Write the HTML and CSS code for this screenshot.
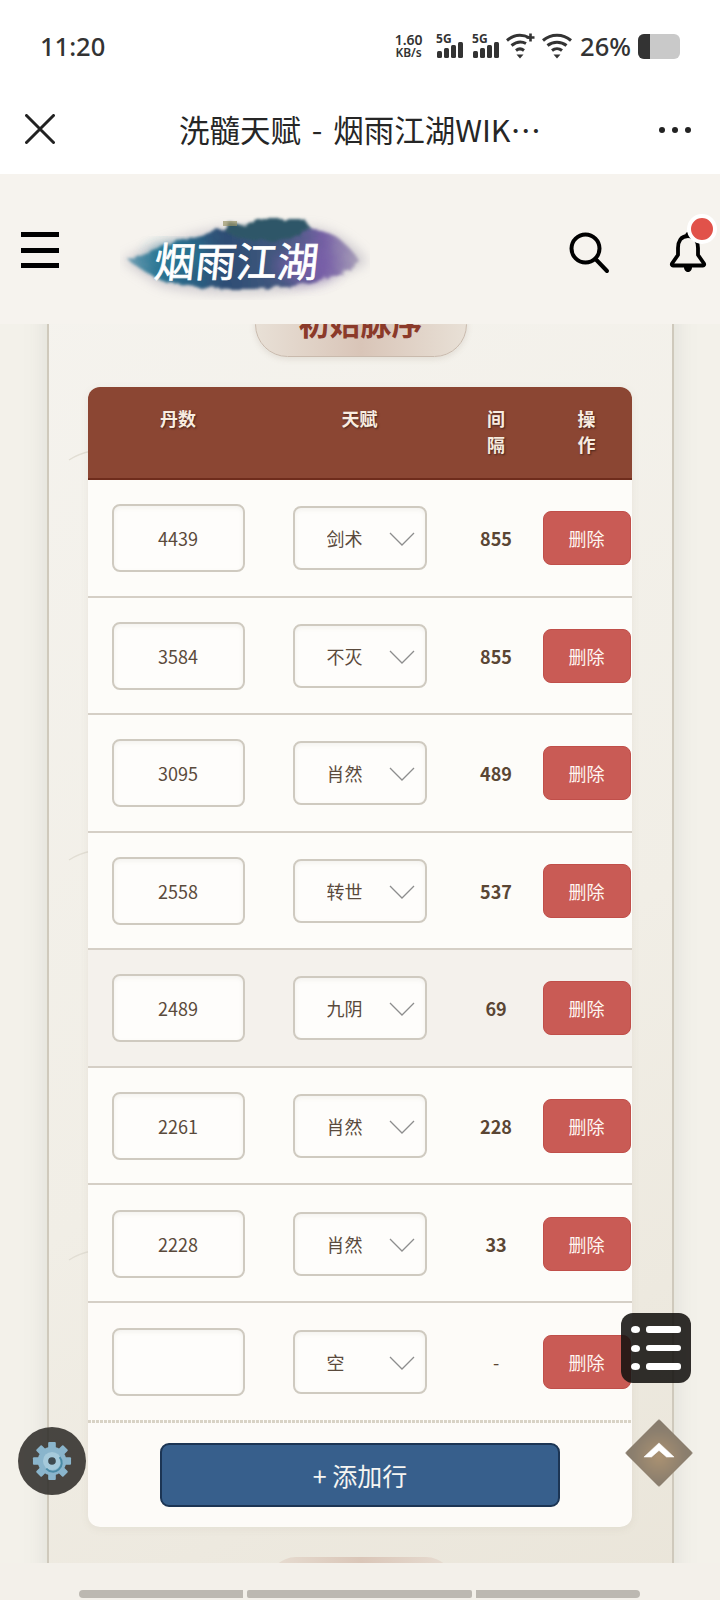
FILE: index.html
```html
<!DOCTYPE html>
<html lang="zh">
<head>
<meta charset="utf-8">
<title>洗髓天赋 - 烟雨江湖WIKI</title>
<link rel="stylesheet" href="styles.css">
</head>
<body>
<div class="screen">
  <div class="status">
    <span class="time">11:20</span>
    <div class="status-right">
      <span class="speed"><b>1.60</b><small>KB/s</small></span>
      <span class="net net-first"><i>5G</i>
        <svg width="27" height="16" viewBox="0 0 27 16"><rect x="0" y="9" width="5" height="7" rx="1.5"/><rect x="7" y="6" width="5" height="10" rx="1.5"/><rect x="14" y="3" width="5" height="13" rx="1.5"/><rect x="21" y="0" width="5" height="16" rx="1.5"/></svg>
      </span>
      <span class="net"><i>5G</i>
        <svg width="27" height="16" viewBox="0 0 27 16"><rect x="0" y="9" width="5" height="7" rx="1.5"/><rect x="7" y="6" width="5" height="10" rx="1.5"/><rect x="14" y="3" width="5" height="13" rx="1.5"/><rect x="21" y="0" width="5" height="16" rx="1.5"/></svg>
      </span>
      <svg class="wifi wifi-plus" width="29" height="26" viewBox="0 0 29 26"><path d="M1 7.5C8 1.5 16 1 24 5M5.500 12.500C10.500 8.500 16 8.300 20 10.500M10 17.500C12.500 15.500 15.500 15.500 18 17.500" fill="none" stroke="#333" stroke-width="3"/><path d="M10.500 21.500h7l-3.500 4z" fill="#333"/><path d="M24.500 0.500v8M20.500 4.500h8" stroke="#333" stroke-width="2.600"/></svg>
      <svg class="wifi" width="30" height="26" viewBox="0 0 30 26"><path d="M1 7.500C9 0.500 21 0.500 29 7.500M5.500 12.500C11 8 19 8 24.500 12.500M10 17.500C13 15 17 15 20 17.500" fill="none" stroke="#333" stroke-width="3"/><path d="M11.500 21.500h7l-3.500 4z" fill="#333"/></svg>
      <span class="pct">26%</span>
      <span class="battery"><span class="battery-fill"></span></span>
    </div>
  </div>

  <div class="titlebar">
    <svg class="close" width="30" height="30" viewBox="0 0 30 30"><path d="M1.500 1.500L28.500 28.500M28.500 1.500L1.500 28.500" stroke="#222" stroke-width="3" stroke-linecap="round"/></svg>
    <span class="title">洗髓天赋 - 烟雨江湖WIK…</span>
    <span class="more"><i></i><i></i><i></i></span>
  </div>

  <header class="site-header">
    <span class="burger"><i></i><i></i><i></i></span>
    <svg class="logo" width="250" height="90" viewBox="0 0 250 90">
      <defs>
        <linearGradient id="ink" x1="0" y1="0" x2="1" y2="0">
          <stop offset="0" stop-color="#6d9db2"/>
          <stop offset="0.14" stop-color="#2b7492"/>
          <stop offset="0.42" stop-color="#2d4d74"/>
          <stop offset="0.68" stop-color="#44597f"/>
          <stop offset="0.84" stop-color="#7560a4"/>
          <stop offset="1" stop-color="#aca4ba"/>
        </linearGradient>
        <filter id="rough" x="-10%" y="-20%" width="120%" height="140%">
          <feTurbulence type="fractalNoise" baseFrequency="0.08" numOctaves="3" seed="4"/>
          <feDisplacementMap in="SourceGraphic" scale="8"/>
          <feGaussianBlur stdDeviation="1.600"/>
        </filter>
        <filter id="halo" x="-15%" y="-30%" width="130%" height="160%">
          <feGaussianBlur stdDeviation="6"/>
        </filter>
        <filter id="soft" x="-30%" y="-50%" width="160%" height="200%">
          <feGaussianBlur stdDeviation="8"/>
        </filter>
      </defs>
      <path d="M2 50C26 38 60 26 100 18H196C218 22 236 36 248 52C226 64 205 72 172 80C125 86 74 84 42 76C26 68 14 58 2 50Z" fill="#bdb9c2" opacity="0.7" filter="url(#halo)"/>
      <path d="M8 50C30 40 60 30 104 19H192C212 20 228 34 240 52C226 63 205 70 168 77C122 81 76 79 46 72C30 66 20 58 8 50Z" fill="url(#ink)" filter="url(#rough)"/>
      <ellipse cx="185" cy="56" rx="30" ry="15" fill="#7a5eaa" opacity="0.75" filter="url(#soft)"/>
      <ellipse cx="58" cy="46" rx="30" ry="10" fill="#2a7d98" opacity="0.8" filter="url(#soft)"/>
      <path d="M104 20L110 12L122 15L134 9H184L192 20L170 30L120 30Z" fill="#2f5668" filter="url(#rough)"/>
      <rect x="103" y="11" width="14" height="5" fill="#9a9468" opacity="0.7"/>
      <text class="logo-text" transform="translate(33 67) skewX(-6)">烟雨江湖</text>
    </svg>
    <svg class="search" width="42" height="42" viewBox="0 0 42 42"><circle cx="17.500" cy="16.500" r="14" fill="none" stroke="#000" stroke-width="4"/><path d="M27.500 27L39 39" stroke="#000" stroke-width="4" stroke-linecap="round"/></svg>
    <span class="bell">
      <svg width="38" height="42" viewBox="0 0 38 42"><path d="M19 5C11.500 5 9 11 9 17V24L3 32.500C2.500 33.500 3 34.500 4 34.500H34C35 34.500 35.500 33.500 35 32.500L29 24V17C29 11 26.500 5 19 5Z" fill="none" stroke="#000" stroke-width="3.800" stroke-linejoin="round"/><path d="M15 36H23C23 39.500 21 41 19 41C17 41 15 39.500 15 36Z" fill="#000"/><circle cx="19" cy="3.500" r="2.500" fill="#000"/></svg>
      <i class="badge"></i>
    </span>
  </header>

  <main class="content">
    <section class="panel">
      <h2 class="pill">初始脉序</h2>
      <div class="table">
        <div class="thead">
          <span>丹数</span><span>天赋</span><span class="narrow">间隔</span><span class="narrow">操作</span>
        </div>

        <div class="row">
          <input class="num" value="4439">
          <label class="pick"><select><option>剑术</option></select><svg width="26" height="14" viewBox="0 0 26 14"><path d="M1 1L13 13L25 1" fill="none" stroke="#8d8d8d" stroke-width="1.300"/></svg></label>
          <b class="gap">855</b>
          <button class="del">删除</button>
        </div>
        <div class="row">
          <input class="num" value="3584">
          <label class="pick"><select><option>不灭</option></select><svg width="26" height="14" viewBox="0 0 26 14"><path d="M1 1L13 13L25 1" fill="none" stroke="#8d8d8d" stroke-width="1.300"/></svg></label>
          <b class="gap">855</b>
          <button class="del">删除</button>
        </div>
        <div class="row">
          <input class="num" value="3095">
          <label class="pick"><select><option>肖然</option></select><svg width="26" height="14" viewBox="0 0 26 14"><path d="M1 1L13 13L25 1" fill="none" stroke="#8d8d8d" stroke-width="1.300"/></svg></label>
          <b class="gap">489</b>
          <button class="del">删除</button>
        </div>
        <div class="row">
          <input class="num" value="2558">
          <label class="pick"><select><option>转世</option></select><svg width="26" height="14" viewBox="0 0 26 14"><path d="M1 1L13 13L25 1" fill="none" stroke="#8d8d8d" stroke-width="1.300"/></svg></label>
          <b class="gap">537</b>
          <button class="del">删除</button>
        </div>
        <div class="row row-hover">
          <input class="num" value="2489">
          <label class="pick"><select><option>九阴</option></select><svg width="26" height="14" viewBox="0 0 26 14"><path d="M1 1L13 13L25 1" fill="none" stroke="#8d8d8d" stroke-width="1.300"/></svg></label>
          <b class="gap">69</b>
          <button class="del">删除</button>
        </div>
        <div class="row">
          <input class="num" value="2261">
          <label class="pick"><select><option>肖然</option></select><svg width="26" height="14" viewBox="0 0 26 14"><path d="M1 1L13 13L25 1" fill="none" stroke="#8d8d8d" stroke-width="1.300"/></svg></label>
          <b class="gap">228</b>
          <button class="del">删除</button>
        </div>
        <div class="row">
          <input class="num" value="2228">
          <label class="pick"><select><option>肖然</option></select><svg width="26" height="14" viewBox="0 0 26 14"><path d="M1 1L13 13L25 1" fill="none" stroke="#8d8d8d" stroke-width="1.300"/></svg></label>
          <b class="gap">33</b>
          <button class="del">删除</button>
        </div>
        <div class="row row-last">
          <input class="num" value="">
          <label class="pick"><select><option>空</option></select><svg width="26" height="14" viewBox="0 0 26 14"><path d="M1 1L13 13L25 1" fill="none" stroke="#8d8d8d" stroke-width="1.300"/></svg></label>
          <span class="gap gap-empty">-</span>
          <button class="del">删除</button>
        </div>

        <div class="add-row"><button class="add">+ 添加行</button></div>
      </div>
      <div class="pill-next"></div>
    </section>
  </main>

  <div class="scrollstrip">
    <i class="seg seg-a"></i><i class="seg seg-b"></i><i class="seg seg-c"></i>
  </div>

  <div class="fab-gear">
    <svg width="40" height="40" viewBox="0 0 42 42">
      <g fill="#8ab5cc">
        <rect x="17" y="1" width="8" height="40" rx="1"/>
        <rect x="17" y="1" width="8" height="40" rx="1" transform="rotate(45 21 21)"/>
        <rect x="17" y="1" width="8" height="40" rx="1" transform="rotate(90 21 21)"/>
        <rect x="17" y="1" width="8" height="40" rx="1" transform="rotate(135 21 21)"/>
        <circle cx="21" cy="21" r="15"/>
      </g>
      <circle cx="21" cy="21" r="9.500" fill="#a6cadb"/>
      <path d="M29 17A9 9 0 0 1 15 29" fill="none" stroke="#4b8ba6" stroke-width="2"/>
      <circle cx="21" cy="21" r="4" fill="#3f4a50"/>
    </svg>
  </div>

  <div class="fab-list">
    <span class="li"><i></i><b></b></span>
    <span class="li"><i></i><b></b></span>
    <span class="li"><i></i><b></b></span>
  </div>

  <div class="fab-top">
    <svg width="32" height="17" viewBox="0 0 34 18"><path d="M1 17L17 2L33 17H25L17 10L9 17Z" fill="#fff" stroke="#fff" stroke-width="0.600" stroke-linejoin="round"/></svg>
  </div>
</div>
</body>
</html>
```

FILE: styles.css
```css
* { box-sizing: border-box; }

html, body { margin: 0; padding: 0; }

body {
  background: #fff;
  font-family: "Noto Sans CJK SC", "Noto Sans", sans-serif;
}

.screen {
  position: relative;
  width: 720px;
  height: 1600px;
  overflow: hidden;
  display: flex;
  flex-direction: column;
}

/* status bar */
.status {
  height: 87px;
  flex: none;
  display: flex;
  align-items: center;
  padding: 5px 40px 0 40px;
  background: #fff;
  color: #333;
}

.time {
  font-family: "Noto Sans", sans-serif;
  font-size: 25.5px;
  font-weight: 500;
}

.status-right {
  margin-left: auto;
  display: flex;
  align-items: center;
}

.speed {
  display: flex;
  flex-direction: column;
  align-items: center;
  width: 30px;
  font-family: "Noto Sans", sans-serif;
  line-height: 13px;
}

.speed b { font-size: 14px; font-weight: 600; }
.speed small { font-size: 12px; font-weight: 600; }

.net {
  position: relative;
  display: block;
  width: 27px;
  height: 24px;
  margin-left: 9px;
}

.net-first { margin-left: 13.5px; }

.net i {
  position: absolute;
  left: -1px;
  top: -2px;
  font-family: "Noto Sans", sans-serif;
  font-style: normal;
  font-weight: 700;
  font-size: 12px;
  line-height: 14px;
}

.net svg {
  position: absolute;
  left: 0;
  bottom: 0;
  fill: #333;
}

.status-right .wifi { margin-left: 7px; }
.status-right .wifi-plus { margin-left: 6px; }

.pct {
  font-family: "Noto Sans", sans-serif;
  font-size: 25.5px;
  font-weight: 500;
  margin-left: 8px;
  line-height: 30px;
}

.battery {
  display: block;
  width: 42px;
  height: 25px;
  margin-left: 7px;
  border-radius: 6px;
  background: #c9c9c9;
  overflow: hidden;
}

.battery-fill {
  display: block;
  width: 12px;
  height: 100%;
  background: #333;
}

/* title bar */
.titlebar {
  height: 87px;
  flex: none;
  display: flex;
  align-items: center;
  justify-content: center;
  position: relative;
  background: #fff;
  padding-bottom: 4px;
}

.close {
  position: absolute;
  left: 25px;
  top: 27px;
}

.title {
  font-size: 30.5px;
  line-height: 40px;
  word-spacing: 4px;
  color: #262626;
}

.more {
  position: absolute;
  left: 659px;
  top: 40px;
  display: flex;
  gap: 7px;
}

.more i {
  width: 6px;
  height: 6px;
  border-radius: 50%;
  background: #222;
}

/* site header */
.site-header {
  height: 150px;
  flex: none;
  position: relative;
  z-index: 2;
  display: flex;
  align-items: center;
  padding: 0 13px 0 21px;
  background: #f6f3ee;
}

.burger {
  display: flex;
  flex-direction: column;
  gap: 10.5px;
  width: 38px;
  margin-top: 2px;
}

.burger i {
  display: block;
  height: 5px;
  background: #000;
}

.logo {
  margin: 12px 0 0 61px;
}

.search { margin: 7px 0 0 auto; }

.bell {
  position: relative;
  display: block;
  width: 38px;
  height: 42px;
  margin: 6px 0 0 59px;
}

.bell svg { display: block; }

.badge {
  position: absolute;
  left: 18px;
  top: -17px;
  width: 30px;
  height: 30px;
  border-radius: 50%;
  border: 4px solid #fff;
  background: #e1524a;
}

.logo-text {
  font-family: "Noto Sans CJK SC", sans-serif;
  font-size: 41px;
  font-weight: 400;
  fill: #fff;
  stroke: #fff;
  stroke-width: 0.7px;
}

/* content */
.content {
  height: 1239px;
  flex: none;
  overflow: hidden;
  background: #f3f1ea;
}

.panel {
  width: 627px;
  margin: -54px 0 0 47px;
  padding: 22px 39px 60px;
  border: solid #cfc9bc;
  border-width: 0 2px;
  box-shadow: 0 0 22px rgba(120, 130, 120, 0.18);
  background-color: #f0ede5;
  background-image:
    url("data:image/svg+xml,%3Csvg xmlns='http://www.w3.org/2000/svg' width='24' height='400'%3E%3Cpath d='M1 13C7 9 14 6 24 4' fill='none' stroke='%23e2ded4' stroke-width='1.500'/%3E%3C/svg%3E"),
    linear-gradient(150deg, #f5f3ee 0%, #f1eee6 55%, #e9e4d8 100%);
  background-repeat: repeat-y, no-repeat;
  background-position: 19px 177px, 0 0;
}

.pill {
  width: 212px;
  height: 65px;
  margin: 0 auto 30px;
  padding-bottom: 6px;
  display: flex;
  align-items: center;
  justify-content: center;
  border: 1px solid #c9baad;
  border-radius: 34px;
  background: linear-gradient(90deg, #e8e0d6 0%, #d9c5b8 50%, #e8e0d6 100%);
  box-shadow: 0 2px 6px rgba(120, 100, 80, 0.15);
  color: #8b3a2a;
  font-size: 31px;
  font-weight: 700;
  line-height: 40px;
}

.table {
  width: 544px;
  border-radius: 12px;
  overflow: hidden;
  background: #fdfbf8;
  box-shadow: 0 2px 8px rgba(120, 100, 80, 0.08);
}

.thead,
.row {
  display: grid;
  grid-template-columns: 180px 183px 90px 91px;
  justify-items: center;
}

.thead {
  height: 93px;
  padding-top: 19px;
  align-items: start;
  background: #8b4633;
  border-bottom: 2px solid #6f2c1c;
  color: #f8ece0;
  font-size: 18px;
  font-weight: 700;
  line-height: 25.5px;
  text-shadow: 1px 1px 2px rgba(0, 0, 0, 0.5);
}

.narrow { width: 18px; text-align: center; }

.row {
  height: 117.55px;
  align-items: center;
  background: #fdfcf9;
  border-bottom: 2px solid #d5cfc6;
  padding-top: 1px;
}

.row-hover { background: #f4f1ec; }

.row-last {
  background: #fdfbf8;
  border-bottom: 0;
}

.num {
  width: 133px;
  height: 68px;
  border: 2px solid #cfcac0;
  border-radius: 8px;
  background: #fefdfb;
  box-shadow: inset 0 2px 4px rgba(120, 110, 90, 0.08);
  color: #5a4a3c;
  font: 18px "Noto Sans CJK SC", "Noto Sans", sans-serif;
  text-align: center;
  outline: none;
}

.pick {
  position: relative;
  display: block;
  width: 134px;
  height: 64px;
}

.pick select {
  appearance: none;
  width: 100%;
  height: 100%;
  padding: 0 0 0 32px;
  border: 2px solid #cfcac0;
  border-radius: 8px;
  background: #fefdfb;
  box-shadow: inset 0 2px 4px rgba(120, 110, 90, 0.08);
  color: #5a4a3c;
  font: 18px "Noto Sans CJK SC", "Noto Sans", sans-serif;
  outline: none;
}

.pick svg {
  position: absolute;
  right: 12px;
  top: 26px;
  pointer-events: none;
}

.gap {
  color: #5a4634;
  font-size: 18px;
  font-weight: 700;
}

.gap-empty { font-weight: 400; }

.del {
  width: 88px;
  height: 54px;
  border: 1px solid #c04f4a;
  border-radius: 8px;
  background: #c95b55;
  color: #fff6f1;
  font: 18px "Noto Sans CJK SC", "Noto Sans", sans-serif;
  padding: 0;
}

.add-row {
  height: 107px;
  padding: 23px 0 0 72px;
  background: repeating-linear-gradient(90deg, #d9d3c6 0, #d9d3c6 3px, transparent 3px, transparent 4px) top left / 100% 3px no-repeat;
}

.add {
  display: block;
  width: 400px;
  height: 64px;
  border: 2px solid #1c3554;
  border-radius: 9px;
  background: #375f8c;
  color: #f5f5f2;
  font: 25px "Noto Sans CJK SC", "Noto Sans", sans-serif;
  padding: 0;
}

.pill-next {
  width: 186px;
  height: 60px;
  margin: 30px auto 0;
  border-radius: 28px 28px 0 0;
  background: linear-gradient(90deg, #e7ddd2 0%, #dac6b8 50%, #e7ddd2 100%);
}

/* bottom strip */
.scrollstrip {
  flex: 1;
  display: flex;
  gap: 4px;
  align-items: flex-start;
  padding: 27px 0 0 79px;
  background: #f3f0ea;
}

.seg {
  display: block;
  height: 8px;
  background: #bcb8b1;
}

.seg-a { width: 164px; border-radius: 4px 0 0 4px; }
.seg-b { width: 225px; border-radius: 2px; }
.seg-c { width: 164px; border-radius: 0 4px 4px 0; }

/* floating buttons */
.fab-gear {
  position: absolute;
  left: 18px;
  top: 1427px;
  width: 68px;
  height: 68px;
  border-radius: 50%;
  background: rgba(44, 42, 38, 0.86);
  display: flex;
  align-items: center;
  justify-content: center;
}

.fab-list {
  position: absolute;
  left: 621px;
  top: 1313px;
  width: 70px;
  height: 70px;
  border-radius: 12px;
  background: rgba(20, 18, 16, 0.88);
  display: flex;
  flex-direction: column;
  justify-content: center;
  gap: 11.5px;
  padding-left: 10px;
}

.li {
  display: flex;
  align-items: center;
  gap: 6px;
}

.li i {
  width: 9px;
  height: 7px;
  border-radius: 50%;
  background: #fff;
}

.li b {
  width: 35px;
  height: 6.500px;
  border-radius: 3px;
  background: #fff;
}

.fab-top {
  position: absolute;
  left: 625px;
  top: 1419px;
  width: 68px;
  height: 68px;
  display: flex;
  align-items: flex-start;
  justify-content: center;
  padding-top: 22px;
}

.fab-top::before {
  content: "";
  position: absolute;
  inset: 0;
  clip-path: polygon(50% 0, 100% 50%, 50% 100%, 0 50%);
  background: radial-gradient(circle at 50% 55%, #ab9272 0%, #8c7f6e 50%, #7f776b 100%);
  filter: blur(1px);
}

.fab-top svg { position: relative; }
```
